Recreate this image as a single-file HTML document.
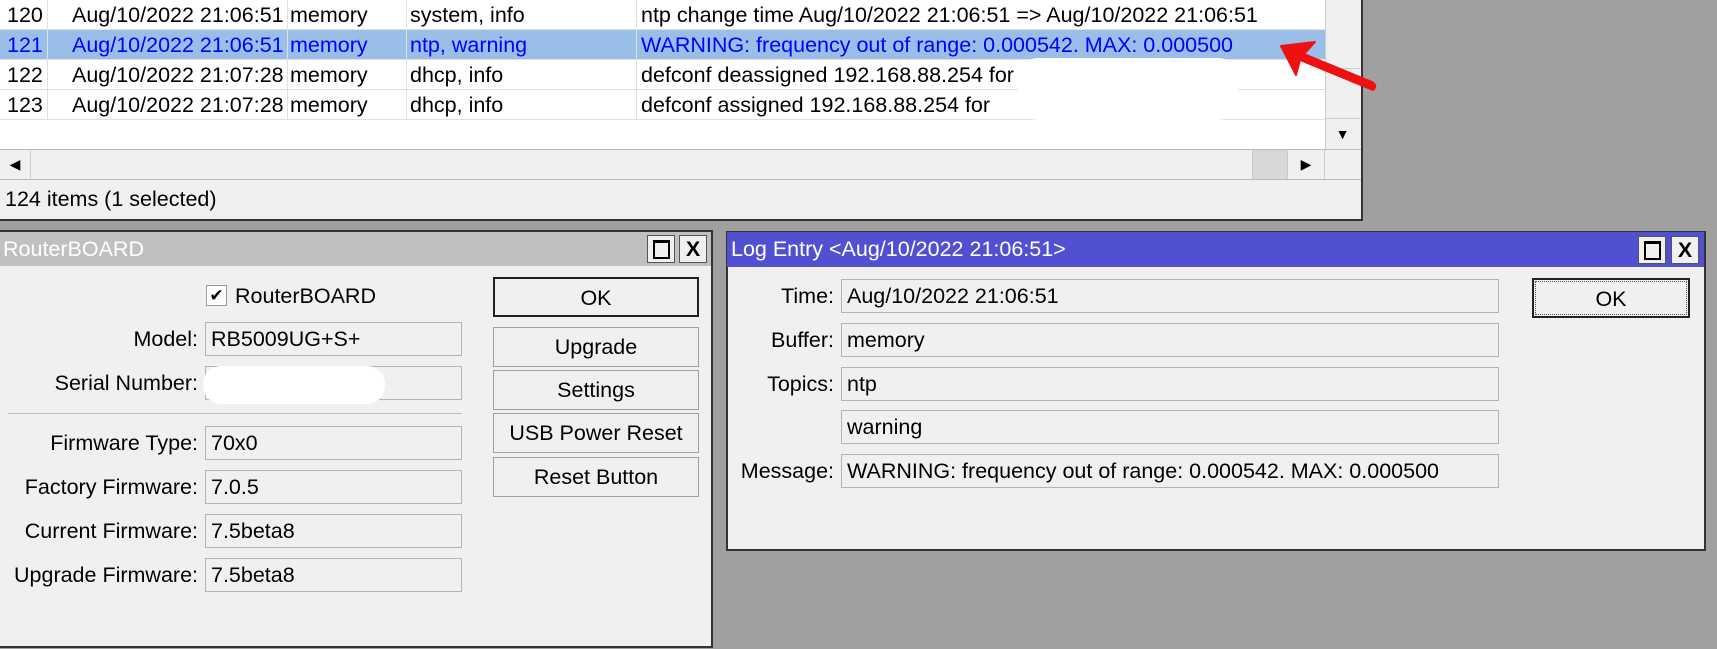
<!DOCTYPE html>
<html><head><meta charset="utf-8"><style>
*{margin:0;padding:0;box-sizing:border-box}
body{width:1717px;height:649px;background:#a0a0a0;position:relative;overflow:hidden;font-family:"Liberation Sans",Arial,sans-serif;font-size:21.5px;color:#000}
.a{position:absolute;white-space:nowrap}
.row{position:absolute;left:0;width:1325px;height:30px;line-height:30px;border-bottom:1px solid #e0e0e0;background:#fff}
.row span{position:absolute;top:0}
.vl{position:absolute;top:0;width:1px;height:120px;background:#e0e0e0}
.fld{position:absolute;background:#f0f0f0;border:1px solid #b4b4b4;height:34px;line-height:32px;padding-left:5px}
.lbl{position:absolute;text-align:right;line-height:34px}
.btn{position:absolute;background:#f0f0f0;border:1px solid #a0a0a0;text-align:center;line-height:38px}
.tb{position:absolute;width:28px;height:28px;background:#f0f0f0;border:1px solid #555}
</style></head><body>
<div class="a" style="left:0;top:0;width:1363px;height:221px;background:#f0f0f0;border-right:2px solid #333;border-bottom:2px solid #333"></div>
<div class="a" style="left:0;top:0;width:1325px;height:149px;background:#fff"></div>
<div class="row" style="top:0"><span style="left:7px">120</span><span style="left:72px">Aug/10/2022 21:06:51</span><span style="left:290px">memory</span><span style="left:410px">system, info</span><span style="left:641px">ntp change time Aug/10/2022 21:06:51 =&gt; Aug/10/2022 21:06:51</span></div>
<div class="row" style="top:30px;background:#99bfe9;color:#0000ff"><span style="left:7px">121</span><span style="left:72px">Aug/10/2022 21:06:51</span><span style="left:290px">memory</span><span style="left:410px">ntp, warning</span><span style="left:641px">WARNING: frequency out of range: 0.000542. MAX: 0.000500</span></div>
<div class="row" style="top:60px"><span style="left:7px">122</span><span style="left:72px">Aug/10/2022 21:07:28</span><span style="left:290px">memory</span><span style="left:410px">dhcp, info</span><span style="left:641px">defconf deassigned 192.168.88.254 for</span></div>
<div class="row" style="top:90px"><span style="left:7px">123</span><span style="left:72px">Aug/10/2022 21:07:28</span><span style="left:290px">memory</span><span style="left:410px">dhcp, info</span><span style="left:641px">defconf assigned 192.168.88.254 for</span></div>
<div class="vl" style="left:47px"></div><div class="vl" style="left:287px"></div><div class="vl" style="left:406px"></div><div class="vl" style="left:636px"></div>
<div class="a" style="left:1018px;top:58px;width:220px;height:62px;background:#fff;border-radius:20px"></div>
<div class="a" style="left:1325px;top:0;width:35px;height:149px;background:#f0f0f0;border-left:1px solid #ccc"></div>
<div class="a" style="left:1325px;top:68px;width:35px;height:1px;background:#ccc"></div>
<div class="a" style="left:1325px;top:118px;width:35px;height:31px;border-top:1px solid #ccc;text-align:center;line-height:30px;font-size:14px">&#9660;</div>
<div class="a" style="left:0;top:149px;width:1361px;height:31px;background:#f0f0f0;border-top:1px solid #bbb;border-bottom:1px solid #bbb"></div>
<div class="a" style="left:0;top:150px;width:31px;height:29px;border-right:1px solid #ccc;text-align:center;line-height:29px;font-size:14px">&#9664;</div>
<div class="a" style="left:1252px;top:150px;width:35px;height:29px;background:#d8d8d8;border-left:1px solid #ccc"></div>
<div class="a" style="left:1287px;top:150px;width:38px;height:29px;border-left:1px solid #ccc;border-right:1px solid #ccc;text-align:center;line-height:29px;font-size:14px">&#9654;</div>
<div class="a" style="left:5px;top:187px;line-height:24px">124 items (1 selected)</div>
<svg class="a" style="left:1260px;top:30px" width="130" height="80"><g fill="#ee1111" stroke="#ee1111"><path d="M21 16 L55 12 L44 24 L112 52 Q118 56 113 60 L108 58 L40 30 L36 45 Z" stroke-width="2" stroke-linejoin="round"/></g></svg>
<div class="a" style="left:0;top:230px;width:713px;height:418px;background:#f0f0f0;border:2px solid #333;border-left:none"></div>
<div class="a" style="left:0;top:232px;width:711px;height:34px;background:#c0c0c0"></div>
<div class="a" style="left:3px;top:232px;line-height:34px;color:#fff">RouterBOARD</div>
<div class="tb" style="left:647px;top:235px"><div class="a" style="left:5px;top:4px;width:17px;height:19px;border:2px solid #000;border-top-width:3px"></div></div>
<div class="tb" style="left:679px;top:235px;text-align:center;line-height:26px;font-weight:bold">X</div>
<div class="a" style="left:206px;top:285px;width:21px;height:21px;border:1px solid #999;background:#fff;font-size:17px;text-align:center;line-height:20px">&#10004;</div>
<div class="a" style="left:235px;top:283px;line-height:26px">RouterBOARD</div>
<div class="lbl" style="left:0;width:198px;top:322px">Model:</div><div class="fld" style="left:205px;top:322px;width:257px">RB5009UG+S+</div>
<div class="lbl" style="left:0;width:198px;top:366px">Serial Number:</div><div class="fld" style="left:205px;top:366px;width:257px"></div>
<div class="a" style="left:203px;top:366px;width:182px;height:38px;background:#fff;border-radius:18px"></div>
<div class="a" style="left:8px;top:413px;width:454px;height:1px;background:#bbb"></div>
<div class="lbl" style="left:0;width:198px;top:426px">Firmware Type:</div><div class="fld" style="left:205px;top:426px;width:257px">70x0</div>
<div class="lbl" style="left:0;width:198px;top:470px">Factory Firmware:</div><div class="fld" style="left:205px;top:470px;width:257px">7.0.5</div>
<div class="lbl" style="left:0;width:198px;top:514px">Current Firmware:</div><div class="fld" style="left:205px;top:514px;width:257px">7.5beta8</div>
<div class="lbl" style="left:0;width:198px;top:558px">Upgrade Firmware:</div><div class="fld" style="left:205px;top:558px;width:257px">7.5beta8</div>
<div class="btn" style="left:493px;top:277px;width:206px;height:40px;border:2px solid #222">OK</div>
<div class="btn" style="left:493px;top:327px;width:206px;height:40px">Upgrade</div>
<div class="btn" style="left:493px;top:370px;width:206px;height:40px">Settings</div>
<div class="btn" style="left:493px;top:413px;width:206px;height:40px">USB Power Reset</div>
<div class="btn" style="left:493px;top:457px;width:206px;height:40px">Reset Button</div>
<div class="a" style="left:726px;top:231px;width:980px;height:320px;background:#f0f0f0;border:2px solid #333;border-top:1px solid #333"></div>
<div class="a" style="left:727px;top:232px;width:977px;height:35px;background:#5050d0"></div>
<div class="a" style="left:731px;top:232px;line-height:35px;color:#fff">Log Entry &lt;Aug/10/2022 21:06:51&gt;</div>
<div class="tb" style="left:1638px;top:236px"><div class="a" style="left:5px;top:4px;width:17px;height:19px;border:2px solid #000;border-top-width:3px"></div></div>
<div class="tb" style="left:1671px;top:236px;text-align:center;line-height:26px;font-weight:bold">X</div>
<div class="lbl" style="left:730px;width:104px;top:279px">Time:</div><div class="fld" style="left:841px;top:279px;width:658px">Aug/10/2022 21:06:51</div>
<div class="lbl" style="left:730px;width:104px;top:323px">Buffer:</div><div class="fld" style="left:841px;top:323px;width:658px">memory</div>
<div class="lbl" style="left:730px;width:104px;top:367px">Topics:</div><div class="fld" style="left:841px;top:367px;width:658px">ntp</div>
<div class="fld" style="left:841px;top:410px;width:658px">warning</div>
<div class="lbl" style="left:720px;width:114px;top:454px">Message:</div><div class="fld" style="left:841px;top:454px;width:658px">WARNING: frequency out of range: 0.000542. MAX: 0.000500</div>
<div class="btn" style="left:1532px;top:278px;width:158px;height:40px;border:2px solid #222;line-height:34px"><div style="border:1px dotted #555;margin:1px;height:34px">OK</div></div>
</body></html>
